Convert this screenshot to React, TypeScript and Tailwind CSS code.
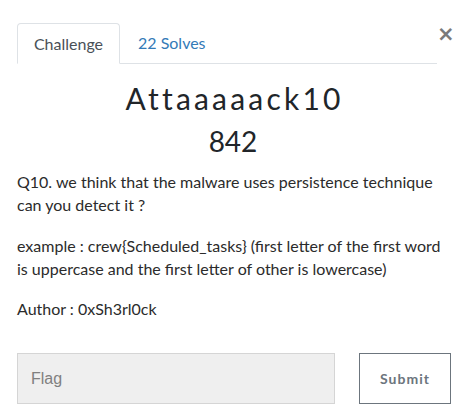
import React from "react";

export default function App() {
  return (
    <div className="w-[466px] h-[413px] bg-white relative" style={{ fontFamily: "Lato, 'Noto Sans', sans-serif" }}>
      <button className="absolute left-[437px] top-[24px] text-[21px] leading-none font-bold text-[#7a7a7a]" style={{ fontFamily: "'DejaVu Sans', sans-serif" }}>
        ×
      </button>
      <div className="pt-[23px] pl-[17px] pr-[29px]">
        <div className="flex border-b border-[#dee2e6] h-[41px]">
          <div className="w-[103px] h-[41px] border border-[#dee2e6] border-b-white rounded-t-[4px] bg-white mb-[-1px] flex items-center justify-center text-[16px] text-[#495057]">
            Challenge
          </div>
          <div className="pl-[18px] flex items-center text-[16px] text-[#337ab7]">22 Solves</div>
        </div>
      </div>
      <div className="text-center mt-[15px]">
        <h3 className="text-[30px] leading-[38px] text-[#212529] tracking-[3.2px] pl-[3px] font-normal">Attaaaaack10</h3>
        <h4 className="text-[28px] leading-[34px] text-[#212529] mt-[7px]">842</h4>
      </div>
      <div className="px-[17px] mt-[12px] text-[16px] leading-[23px] text-[#2b2b2b]">
        <p>Q10. we think that the malware uses persistence technique can you detect it ?</p>
        <p className="mt-[18px]">example : crew{"{"}Scheduled_tasks{"}"} (first letter of the first word is uppercase and the first letter of other is lowercase)</p>
        <p className="mt-[17px]">Author : 0xSh3rl0ck</p>
      </div>
      <div className="absolute left-[17px] top-[353px] flex gap-[24px]">
        <div className="w-[318px] h-[51px] bg-[#efefef] border border-[#d5d5d5] flex items-center pl-[13px] text-[16px] text-[#808080]" style={{ fontFamily: "'Liberation Sans', Arial, sans-serif" }}>
          Flag
        </div>
        <div className="w-[92px] h-[51px] border border-[#6c757d] flex items-center justify-center text-[14px] font-bold text-[#6c757d] tracking-[1px]">
          Submit
        </div>
      </div>
    </div>
  );
}
